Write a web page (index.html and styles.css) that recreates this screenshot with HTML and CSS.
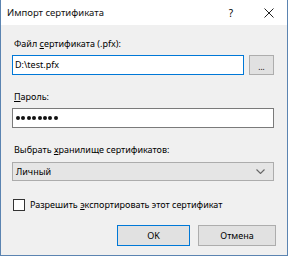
FILE: index.html
```html
<!DOCTYPE html>
<html lang="ru">
<head>
  <meta charset="UTF-8">
  <title>Импорт сертификата</title>
  <link rel="stylesheet" href="styles.css">
</head>
<body>
  <div class="window">
    <div class="titlebar">
      <span class="title">Импорт сертификата</span>
      <span class="help">?</span>
      <span class="close">
        <svg width="10" height="10" viewBox="0 0 10 10"><path d="M0.5 0.5 L9.5 9.5 M9.5 0.5 L0.5 9.5" stroke="#222" stroke-width="1" fill="none"/></svg>
      </span>
    </div>
    <div class="content">
      <div class="label first">Файл <u>с</u>ертификата (.pfx):</div>
      <div class="row">
        <div class="field focused">D:\test.pfx</div>
        <div class="btn browse">...</div>
      </div>
      <div class="label"><u>П</u>ароль:</div>
      <div class="field password">
        <i></i><i></i><i></i><i></i><i></i><i></i><i></i><i></i>
      </div>
      <div class="label store">Выбрать <u>х</u>ранилище сертификатов:</div>
      <div class="select">
        <span>Личный</span>
        <svg width="9" height="5" viewBox="0 0 9 5"><path d="M0.5 0.5 L4.5 4.5 L8.5 0.5" stroke="#666" stroke-width="1.1" fill="none"/></svg>
      </div>
      <label class="check">
        <span class="box"></span>
        <span>Разрешить <u>э</u>кспортировать этот сертификат</span>
      </label>
      <div class="actions">
        <div class="btn ok">OK</div>
        <div class="btn cancel">Отмена</div>
      </div>
    </div>
  </div>
</body>
</html>
```

FILE: styles.css
```css
body {
  margin: 0;
  font-family: "Noto Sans", "Open Sans", sans-serif;
  font-size: 9px;
  color: #000;
  background: #f0f0f0;
}
.window {
  width: 288px;
  height: 256px;
  box-sizing: border-box;
  border: 1px solid #5b84b1;
  border-top: none;
  background: #f0f0f0;
}
.titlebar {
  height: 25px;
  background: #fff;
  display: flex;
  align-items: center;
  padding-left: 6px;
}
.title {
  flex: 1;
  color: #111;
  font-size: 9.5px;
}
.help {
  width: 8px;
  font-size: 10px;
  text-align: center;
  margin-right: 29px;
}
.close {
  display: flex;
  margin-right: 13px;
}
.content {
  padding: 0 13px 0 11px;
}
.label {
  height: 12px;
  line-height: 12px;
  margin: 16px 0 5px 2px;
}
.label.first {
  margin-top: 13px;
}
.label.store {
  margin-bottom: 6px;
}
.row {
  display: flex;
  gap: 5px;
}
.field {
  flex: 1;
  height: 20px;
  box-sizing: border-box;
  border: 1px solid #7a7a7a;
  background: #fff;
  padding: 0 2px;
  line-height: 18px;
}
.field.focused {
  border-color: #0078d7;
}
.password {
  display: flex;
  align-items: center;
  gap: 1.4px;
  padding-left: 3px;
}
.password i {
  width: 4px;
  height: 4px;
  border-radius: 50%;
  background: #111;
}
.btn {
  box-sizing: border-box;
  height: 21px;
  border: 1px solid #adadad;
  background: #e1e1e1;
  display: flex;
  align-items: center;
  justify-content: center;
}
.browse {
  width: 25px;
  height: 20px;
  padding-top: 2px;
  font-size: 8px;
}
.select {
  height: 19px;
  box-sizing: border-box;
  border: 1px solid #acacac;
  background: #e5e5e5;
  display: flex;
  align-items: center;
  justify-content: space-between;
  padding: 0 8px 0 3px;
}
.check {
  display: flex;
  align-items: center;
  gap: 5px;
  margin: 17px 0 0 1px;
  height: 13px;
}
.box {
  width: 10px;
  height: 10px;
  border: 1px solid #333;
  background: #fff;
}
.actions {
  display: flex;
  justify-content: flex-end;
  gap: 8px;
  margin: 14px -2px 0 0;
}
.ok {
  width: 73px;
  border-color: #0078d7;
}
.cancel {
  width: 78px;
}
u {
  text-decoration-thickness: 1px;
  text-underline-offset: 1px;
}
```
